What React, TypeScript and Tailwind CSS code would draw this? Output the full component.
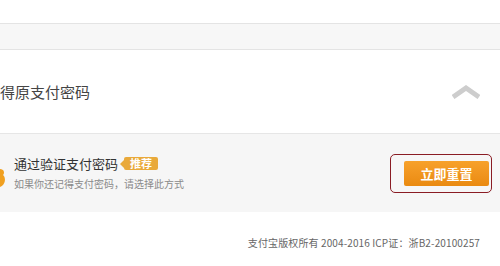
export default function App() {
  return (
    <div
      className="w-[500px] h-[266px] overflow-hidden bg-white text-[#333]"
      style={{ fontFamily: '"Noto Sans CJK SC", "Liberation Sans", sans-serif' }}
    >
      <div className="h-[23px] bg-white" />
      <div className="h-[27px] border-y border-[#e4e4e4] bg-[#f7f7f7]" />
      <div className="h-[83px] flex items-center justify-between pr-[20px]">
        <span className="text-[15px] text-[#444] leading-none">得原支付密码</span>
        <svg width="28" height="14" viewBox="0 0 28 14">
          <path d="M1 12 L14 3 L27 12" fill="none" stroke="#cdcdcd" strokeWidth="5" strokeLinejoin="miter" />
        </svg>
      </div>
      <div className="h-[79px] border-t border-[#e6e6e6] bg-[#f6f6f6] flex items-center justify-between pr-[8px]">
        <div className="flex items-center">
          <svg width="6" height="24" viewBox="0 0 6 24" className="mt-[8px]">
            <path d="M0 4 C4 4 5 8 3 10 C6 12 6 20 0 22 Z" fill="#f0a020" />
          </svg>
          <div className="ml-[8px] flex flex-col">
            <div className="flex items-center">
              <span className="text-[13px] leading-none text-[#333]">通过验证支付密码</span>
              <span className="relative ml-[6px] bg-[#e9a93a] text-white text-[11px] leading-none px-[6px] py-[1px] rounded-[2px] font-bold">
                <span className="absolute left-[-4px] top-1/2 -translate-y-1/2 w-0 h-0 border-y-[4px] border-y-transparent border-r-[4px] border-r-[#e9a93a]" />
                推荐
              </span>
            </div>
            <span className="mt-[9px] text-[10px] leading-none text-[#8a8a8a]">
              如果你还记得支付密码，请选择此方式
            </span>
          </div>
        </div>
        <div className="w-[102px] h-[39px] rounded-[5px] border-[1.5px] border-[#8a1c24] flex items-center justify-end pr-[2px]">
          <button className="w-[85px] h-[25px] rounded-[2px] bg-gradient-to-b from-[#f7a12a] to-[#ea8a10] text-white text-[13px] font-bold leading-none">
            立即重置
          </button>
        </div>
      </div>
      <div className="flex justify-end pr-[20px] pt-[26px]">
        <span className="text-[10px] tracking-[0.12px] leading-none text-[#666]">支付宝版权所有 2004-2016 ICP证：浙B2-20100257</span>
      </div>
    </div>
  );
}
